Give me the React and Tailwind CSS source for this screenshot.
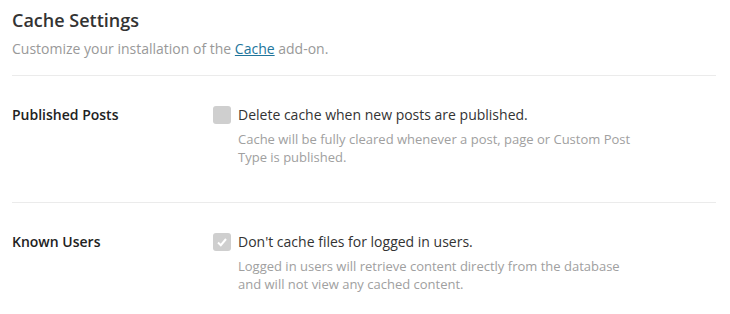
export default function App() {
  const font = { fontFamily: '"Open Sans", "Noto Sans", sans-serif' };
  return (
    <div className="w-[730px] h-[314px] bg-white" style={font}>
      <div className="pl-3 pr-[14px]">
        <div className="pt-[6px] pb-[16px] border-b border-[#ebebeb]">
          <h2 className="text-[18px] leading-[28px] font-semibold text-[#333]">Cache Settings</h2>
          <p className="mt-[5px] text-[14px] leading-[20px] text-[#999]">
            Customize your installation of the{" "}
            <a className="text-[#21759b] underline">Cache</a> add-on.
          </p>
        </div>
        <div className="flex pt-[29px] pb-[36px] border-b border-[#ebebeb]">
          <div className="w-[201px] text-[14px] leading-[20px] font-semibold text-[#222]">Published Posts</div>
          <div className="flex flex-col">
            <label className="flex items-center gap-[7px]">
              <span className="w-[18px] h-[18px] rounded-[3px] bg-[#cfcfcf]"></span>
              <span className="text-[14px] leading-[20px] text-[#333]">Delete cache when new posts are published.</span>
            </label>
            <p className="ml-[25px] mt-[5px] w-[400px] text-[13px] leading-[18px] text-[#a0a0a0]">
              Cache will be fully cleared whenever a post, page or Custom Post Type is published.
            </p>
          </div>
        </div>
        <div className="flex pt-[29px]">
          <div className="w-[201px] text-[14px] leading-[20px] font-semibold text-[#222]">Known Users</div>
          <div className="flex flex-col">
            <label className="flex items-center gap-[7px]">
              <span className="w-[18px] h-[18px] rounded-[3px] bg-[#cfcfcf] flex items-center justify-center">
                <svg width="12" height="12" viewBox="0 0 12 12">
                  <path d="M2 6.5 L4.8 9.2 L10 3" fill="none" stroke="#fff" strokeWidth="2" />
                </svg>
              </span>
              <span className="text-[14px] leading-[20px] text-[#333]">Don't cache files for logged in users.</span>
            </label>
            <p className="ml-[25px] mt-[5px] w-[400px] text-[13px] leading-[18px] text-[#a0a0a0]">
              Logged in users will retrieve content directly from the database and will not view any cached content.
            </p>
          </div>
        </div>
      </div>
    </div>
  );
}
